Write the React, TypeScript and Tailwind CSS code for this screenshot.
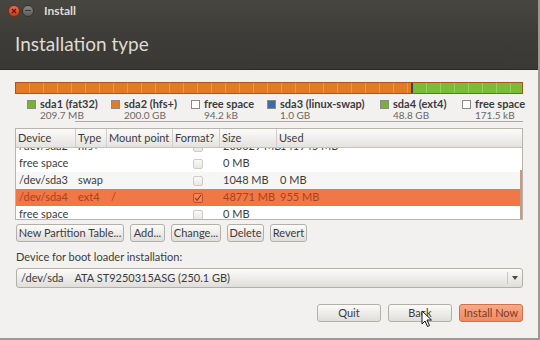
import React from "react";

// ── Data ─────────────────────────────────────────────────────────────────────

const legend = [
  { label: "sda1 (fat32)", size: "209.7 MB", color: "bg-[#73b62e]", w: "w-[84px]" },
  { label: "sda2 (hfs+)", size: "200.0 GB", color: "bg-[#e97a25]", w: "w-[80px]" },
  { label: "free space", size: "94.2 kB", color: "bg-white", w: "w-[76px]" },
  { label: "sda3 (linux-swap)", size: "1.0 GB", color: "bg-[#3b6ea8]", w: "w-[113px]" },
  { label: "sda4 (ext4)", size: "48.8 GB", color: "bg-[#73b62e]", w: "w-[82px]" },
  { label: "free space", size: "171.5 kB", color: "bg-white", w: "w-[70px]" },
];

type Row = {
  device: string;
  type: string;
  mount: string;
  format: boolean;
  size: string;
  used: string;
  selected?: boolean;
  shade?: boolean;
};

const rows: Row[] = [
  { device: "/dev/sda2", type: "hfs+", mount: "", format: false, size: "200029 MB", used: "141945 MB" },
  { device: "free space", type: "", mount: "", format: false, size: "0 MB", used: "" },
  { device: "/dev/sda3", type: "swap", mount: "", format: false, size: "1048 MB", used: "0 MB", shade: true },
  { device: "/dev/sda4", type: "ext4", mount: "/", format: true, size: "48771 MB", used: "955 MB", selected: true },
  { device: "free space", type: "", mount: "", format: false, size: "0 MB", used: "" },
];

// ── Pieces ───────────────────────────────────────────────────────────────────

function Btn({ children, className = "" }: { children: React.ReactNode; className?: string }) {
  return (
    <div
      className={`h-[18px] px-[3px] flex items-center justify-center whitespace-nowrap rounded-[3px] border border-[#b3b0aa] bg-gradient-to-b from-[#fbfbfa] to-[#e0ded9] text-[11px] text-[#3c3c3c] ${className}`}
    >
      {children}
    </div>
  );
}

function Check({ on, sel }: { on: boolean; sel?: boolean }) {
  return (
    <div
      className={`w-[10px] h-[10px] rounded-[2px] border flex items-center justify-center ${
        sel ? "border-[#b9532a] bg-[#f3875a]" : "border-[#cfccc7] bg-gradient-to-b from-[#fafafa] to-[#e8e7e4]"
      }`}
    >
      {on && (
        <svg width="8" height="8" viewBox="0 0 8 8" fill="none" stroke="#8a3316" strokeWidth="1.1">
          <path d="M1 4l2 2.3L7 1" />
        </svg>
      )}
    </div>
  );
}

function Cursor() {
  return (
    <svg width="12" height="18" viewBox="0 0 12 18" className="absolute left-[421px] top-[310px]">
      <path d="M1 1v13l3-3 2.5 5.5 2-1L6 10h4.5z" fill="#fff" stroke="#111" strokeWidth="1" strokeLinejoin="round" />
    </svg>
  );
}

// ── App ──────────────────────────────────────────────────────────────────────

export default function App() {
  const cols = "grid grid-cols-[60px_31px_66px_47px_57px_1fr]";

  return (
    <div
      className="relative w-[540px] h-[340px] overflow-hidden flex flex-col bg-[#f2f1f0] border-r-2 border-b-2 border-[#9a9893]"
      style={{ fontFamily: "Lato, 'Open Sans', 'DejaVu Sans', sans-serif" }}
    >
      {/* Title bar + header */}
      <div className="h-[70px] shrink-0 bg-gradient-to-b from-[#47463f] via-[#3d3c38] to-[#3a3935] border-b border-[#2a2926] flex flex-col">
        <div className="h-[21px] flex items-center pl-[8px] gap-[2px]">
          <div className="w-[12px] h-[12px] rounded-full bg-gradient-to-b from-[#f26b4a] to-[#c43d1c] border border-[#7a2a17] flex items-center justify-center">
            <svg width="6" height="6" viewBox="0 0 6 6" stroke="#5a1a0c" strokeWidth="1.2">
              <path d="M1 1l4 4M5 1L1 5" />
            </svg>
          </div>
          <div className="w-[12px] h-[12px] rounded-full bg-gradient-to-b from-[#8b8984] to-[#5d5b57] border border-[#33322e] flex items-center justify-center">
            <div className="w-[6px] h-[1px] bg-[#3a3935]" />
          </div>
          <span className="ml-[8px] text-[12px] font-bold text-[#dfdbd2]">Install</span>
        </div>
        <div className="pl-[15px] pt-[11px] text-[19px] leading-[24px] text-[#dfdbd2]">Installation type</div>
      </div>

      {/* Body */}
      <div className="flex-1 flex flex-col px-[15px] pt-[12px]">
        {/* Partition bar */}
        <div className="h-[12px] flex border border-[#a8561c] overflow-hidden">
          <div className="w-[395px] bg-[#e27a26] bg-[repeating-linear-gradient(90deg,transparent_0,transparent_13px,rgba(255,220,180,0.3)_13px,rgba(255,220,180,0.3)_14px)]" />
          <div className="w-[2px] bg-[#3a4650]" />
          <div className="flex-1 bg-[#78bd35] bg-[repeating-linear-gradient(90deg,transparent_0,transparent_13px,rgba(220,255,190,0.3)_13px,rgba(220,255,190,0.3)_14px)]" />
        </div>

        {/* Legend */}
        <div className="flex pl-[12px] pt-[4px]">
          {legend.map((l, i) => (
            <div key={i} className={`${l.w} flex gap-[4px] shrink-0`}>
              <div className={`mt-[2px] w-[9px] h-[9px] border border-[#8c8a85] ${l.color}`} />
              <div className="flex flex-col">
                <span className="text-[11px] leading-[12px] font-bold text-[#3c3c3c] whitespace-nowrap">{l.label}</span>
                <span className="text-[10px] leading-[11px] text-[#6a6865] whitespace-nowrap">{l.size}</span>
              </div>
            </div>
          ))}
        </div>
        <div className="ml-[60px] h-[1px] bg-[#d99a7c]" />

        {/* Table */}
        <div className="mt-[6px] h-[92px] border border-[#b7b4ae] bg-white flex flex-col text-[11px] text-[#3c3c3c]">
          <div className={`${cols} h-[19px] shrink-0 bg-gradient-to-b from-[#fbfbfa] to-[#e5e3e0] border-b border-[#c6c3be]`}>
            {["Device", "Type", "Mount point", "Format?", "Size", "Used"].map((h, i) => (
              <div key={h} className={`flex items-center pl-[2px] whitespace-nowrap overflow-hidden ${i < 5 ? "border-r border-[#d2cfca]" : ""}`}>
                {h}
              </div>
            ))}
          </div>
          <div className="flex-1 overflow-hidden relative">
            <div className="-mt-[10px]">
              {rows.map((r, i) => (
                <div
                  key={i}
                  className={`${cols} h-[17px] items-center ${
                    r.selected ? "bg-[#f07746] text-[#a8441c]" : r.shade ? "bg-[#f6f6f5]" : "bg-white"
                  }`}
                >
                  <span className="pl-[3px] whitespace-nowrap">{r.device}</span>
                  <span className="pl-[2px]">{r.type}</span>
                  <span className="pl-[4px]">{r.mount}</span>
                  <span className="flex justify-center pl-[2px]">
                    <Check on={r.format} sel={r.selected} />
                  </span>
                  <span className="pl-[3px] whitespace-nowrap">{r.size}</span>
                  <span className="pl-[3px] whitespace-nowrap">{r.used}</span>
                </div>
              ))}
            </div>
            <div className="absolute right-0 top-[22px] bottom-0 w-[2px] bg-[#c79a86]" />
          </div>
        </div>

        {/* Partition buttons */}
        <div className="flex gap-[6px] mt-[4px] ml-[1px]">
          <Btn className="w-[108px]">New Partition Table...</Btn>
          <Btn className="w-[35px]">Add...</Btn>
          <Btn className="w-[50px]">Change...</Btn>
          <Btn className="w-[37px]">Delete</Btn>
          <Btn className="w-[37px]">Revert</Btn>
        </div>

        <div className="mt-[8px] ml-[1px] text-[11px] leading-[14px] text-[#3c3c3c]">Device for boot loader installation:</div>

        {/* Combo box */}
        <div className="mt-[4px] ml-[1px] h-[20px] flex rounded-[3px] border border-[#b3b0aa] bg-gradient-to-b from-[#fbfbfa] to-[#e0ded9] text-[11px] text-[#3c3c3c]">
          <div className="flex-1 flex items-center pl-[4px] whitespace-pre">/dev/sda    ATA ST9250315ASG (250.1 GB)</div>
          <div className="w-[15px] my-[3px] border-l border-[#c9c6c1] flex items-center justify-center">
            <svg width="6" height="4" viewBox="0 0 6 4">
              <path d="M0 0h6L3 4z" fill="#4a4a4a" />
            </svg>
          </div>
        </div>

        {/* Footer buttons */}
        <div className="mt-[16px] flex justify-end gap-[7px]">
          <Btn className="w-[64px]">Quit</Btn>
          <Btn className="w-[64px]">Back</Btn>
          <div className="w-[64px] h-[18px] flex items-center justify-center whitespace-nowrap rounded-[3px] border border-[#d0714c] bg-gradient-to-b from-[#f7a989] to-[#ee8a62] text-[11px] text-[#7e3a1f]">
            Install Now
          </div>
        </div>
      </div>

      <Cursor />
    </div>
  );
}
